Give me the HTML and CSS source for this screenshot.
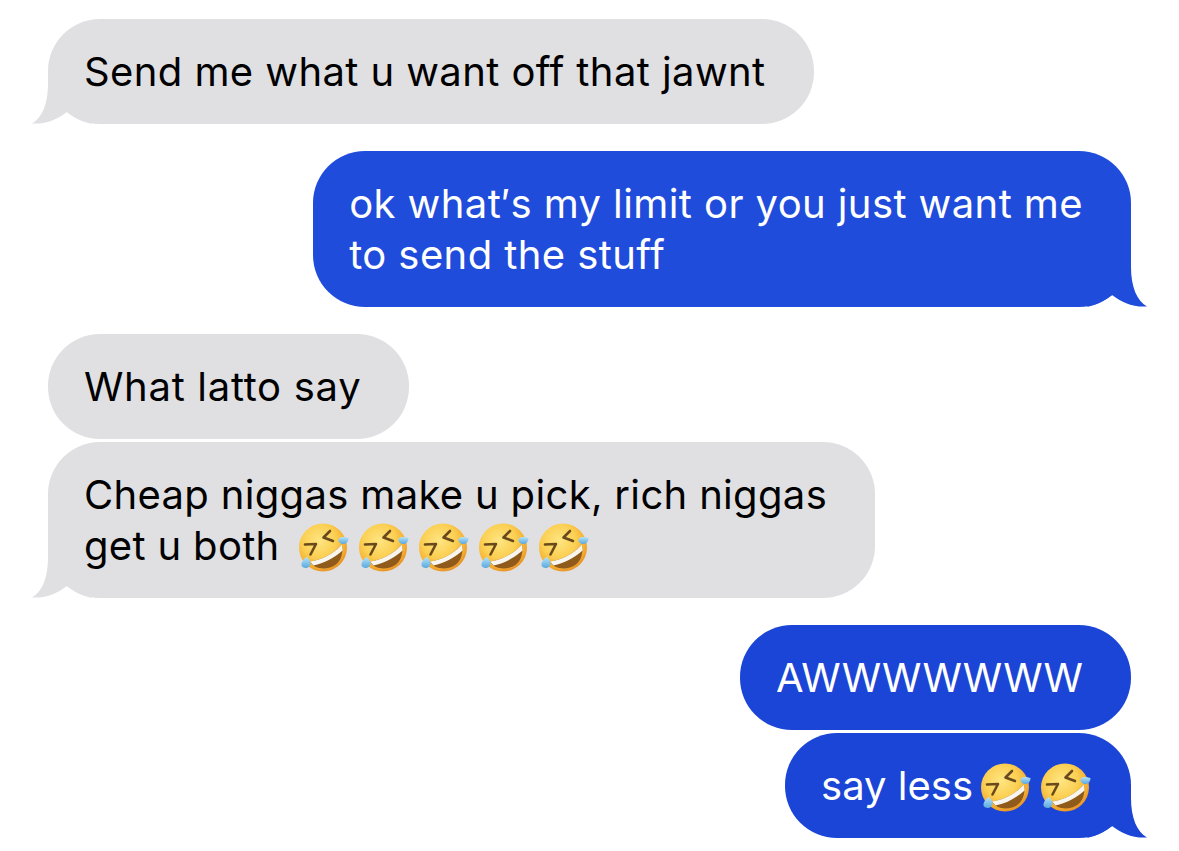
FILE: index.html
```html
<!DOCTYPE html>
<html lang="en">
<head>
<meta charset="utf-8">
<title>Messages</title>
<link rel="stylesheet" href="styles.css">
</head>
<body>
<svg class="defs" aria-hidden="true">
  <defs>
    <radialGradient id="face" cx="0.42" cy="0.36" r="0.64">
      <stop offset="0" stop-color="#fee582"/>
      <stop offset="0.55" stop-color="#fbcf52"/>
      <stop offset="0.88" stop-color="#f3ab30"/>
      <stop offset="1" stop-color="#e9962b"/>
    </radialGradient>
    <linearGradient id="tear" x1="0" y1="0" x2="0" y2="1">
      <stop offset="0" stop-color="#b4e2f7"/>
      <stop offset="1" stop-color="#5aa9e0"/>
    </linearGradient>
    <symbol id="rofl" viewBox="0 0 51 49">
      <circle cx="25" cy="24.500" r="24" fill="url(#face)"/>
      <path d="M12 38.500C24 37 35 31 44 21.500C46 33 41 42 32 44.500C24 47 15 44.500 12 38.500Z" fill="#8f5a1a"/>
      <path d="M12 38.500C24 37 35 31 44 21.500L44.600 27.500C36 35 26 40.500 15.500 42.500Z" fill="#f8f5ee"/>
      <path d="M32 8L25.500 14.500L35 18" fill="none" stroke="#6a4a1c" stroke-width="2.600" stroke-linecap="round" stroke-linejoin="round"/>
      <path d="M7 21.500L18 21L12.500 31.500" fill="none" stroke="#6a4a1c" stroke-width="2.600" stroke-linecap="round" stroke-linejoin="round"/>
      <path d="M50.500 15C50.500 19 47.500 21.500 44.500 21C41.500 20.500 39.500 17.500 41 15.500C43 13 47 14 50.500 15Z" fill="url(#tear)"/>
      <path d="M3.500 42.500C3 39.500 6 35.500 8.500 34C10.500 35 12.500 38 12.500 40.500C12.500 43 10 45 7.500 45C5.500 45 4 44 3.500 42.500Z" fill="url(#tear)"/>
    </symbol>
  </defs>
</svg>
<main class="thread">
  <div class="bubble in">Send me what u want off that jawnt<svg class="tail" viewBox="0 0 60 54"><path d="M16 0L16 14C16 34 10 48 0 53.500C14 54.500 26 49 35 42C42 47 50 52 60 54Z"/></svg></div>
  <div class="bubble out first">ok what′s my limit or you just want me<br>to send the stuff<svg class="tail" viewBox="0 0 60 54"><path d="M16 0L16 14C16 34 10 48 0 53.500C14 54.500 26 49 35 42C42 47 50 52 60 54Z"/></svg></div>
  <div class="bubble in group-start spacing-wide">What latto say</div>
  <div class="bubble in tight spacing-snug">Cheap niggas make u pick, rich niggas<br>get u both <svg class="emoji lead"><use href="#rofl"/></svg><svg class="emoji"><use href="#rofl"/></svg><svg class="emoji"><use href="#rofl"/></svg><svg class="emoji"><use href="#rofl"/></svg><svg class="emoji"><use href="#rofl"/></svg><svg class="tail" viewBox="0 0 60 54"><path d="M16 0L16 14C16 34 10 48 0 53.500C14 54.500 26 49 35 42C42 47 50 52 60 54Z"/></svg></div>
  <div class="bubble out group-start spacing-none">AWWWWWWW</div>
  <div class="bubble out tight spacing-none">say less<svg class="emoji lead"><use href="#rofl"/></svg><svg class="emoji end"><use href="#rofl"/></svg><svg class="tail" viewBox="0 0 60 54"><path d="M16 0L16 14C16 34 10 48 0 53.500C14 54.500 26 49 35 42C42 47 50 52 60 54Z"/></svg></div>
</main>
</body>
</html>
```

FILE: styles.css
```css
* { box-sizing: border-box; }

html, body {
  margin: 0;
  background: #fff;
}

body {
  width: 1179px;
  height: 851px;
  overflow: hidden;
}

.defs {
  position: absolute;
  width: 0;
  height: 0;
}

.thread {
  display: flex;
  flex-direction: column;
  padding: 19px 48px 0;
  font-family: Inter, "Liberation Sans", sans-serif;
  font-size: 40px;
  letter-spacing: 0.41px;
  line-height: 51px;
}

.bubble {
  position: relative;
  padding: 27px 48px 27px 36px;
  border-radius: 52px;
  white-space: nowrap;
}

.spacing-wide { letter-spacing: 0.7px; }
.spacing-snug { letter-spacing: 0.33px; }
.spacing-none { letter-spacing: 0; }

.in {
  align-self: flex-start;
  background: #e0e0e3;
  color: #000;
}

.out {
  align-self: flex-end;
  background: #1b45d6;
  color: #fff;
}

.first {
  margin-top: 27px;
  background: #1f4cdb;
}

.group-start { margin-top: 27px; }
.tight { margin-top: 3px; }

.tail {
  position: absolute;
  left: -16px;
  bottom: 0;
  width: 60px;
  height: 54px;
  fill: #e0e0e3;
}

.out .tail {
  left: auto;
  right: -16px;
  transform: scaleX(-1);
  fill: #1b45d6;
}

.first .tail { fill: #1f4cdb; }

.emoji {
  width: 51px;
  height: 49px;
  margin: -6px 9px -6px 0;
  vertical-align: -6px;
}

.lead { margin-left: 7px; }
.end { margin-right: -8px; }
```
